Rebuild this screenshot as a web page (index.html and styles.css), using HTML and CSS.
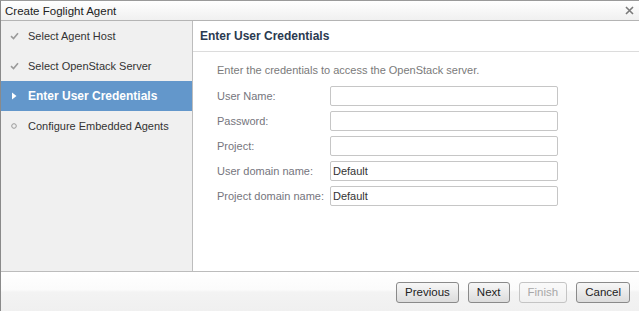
FILE: index.html
```html
<!DOCTYPE html>
<html>
<head>
<meta charset="utf-8">
<link rel="stylesheet" href="styles.css">
</head>
<body>
<div class="dialog">
  <div class="titlebar">
    <span class="title">Create Foglight Agent</span>
    <svg class="close" width="9" height="9" viewBox="0 0 9 9"><path d="M1 1L8 8M8 1L1 8" stroke="#7a7a7a" stroke-width="1.6"/></svg>
  </div>
  <div class="main">
    <div class="sidebar">
      <div class="step done">
        <svg class="icon" width="9" height="8" viewBox="0 0 9 8"><path d="M1 4.2L3.5 6.5L8 1.2" fill="none" stroke="#9a9a9a" stroke-width="1.6"/></svg>
        <span>Select Agent Host</span>
      </div>
      <div class="step done">
        <svg class="icon" width="9" height="8" viewBox="0 0 9 8"><path d="M1 4.2L3.5 6.5L8 1.2" fill="none" stroke="#9a9a9a" stroke-width="1.6"/></svg>
        <span>Select OpenStack Server</span>
      </div>
      <div class="step active">
        <svg class="icon" width="9" height="8" viewBox="0 0 9 8"><path d="M2 0.5L6.5 4L2 7.5Z" fill="#ffffff"/></svg>
        <span>Enter User Credentials</span>
      </div>
      <div class="step">
        <svg class="icon" width="9" height="8" viewBox="0 0 9 8"><circle cx="4" cy="4" r="2.3" fill="none" stroke="#9a9a9a" stroke-width="1"/></svg>
        <span>Configure Embedded Agents</span>
      </div>
    </div>
    <div class="content">
      <div class="header">Enter User Credentials</div>
      <div class="body">
        <p class="desc">Enter the credentials to access the OpenStack server.</p>
        <div class="form">
          <label>User Name:</label><div class="input"></div>
          <label>Password:</label><div class="input"></div>
          <label>Project:</label><div class="input"></div>
          <label>User domain name:</label><div class="input">Default</div>
          <label>Project domain name:</label><div class="input">Default</div>
        </div>
      </div>
    </div>
  </div>
  <div class="footer">
    <button class="btn">Previous</button>
    <button class="btn">Next</button>
    <button class="btn disabled">Finish</button>
    <button class="btn">Cancel</button>
  </div>
</div>
</body>
</html>
```
FILE: styles.css
```css
html, body {
  margin: 0;
  padding: 0;
  background: #ffffff;
}
body {
  font-family: "Liberation Sans", Arial, sans-serif;
  font-size: 11px;
  color: #333;
}
.dialog {
  width: 639px;
  height: 311px;
  box-sizing: border-box;
  border-left: 1px solid #8a8a8a;
  border-top: 1px solid #9a9a9a;
  display: flex;
  flex-direction: column;
}
.titlebar {
  height: 19px;
  flex: none;
  display: flex;
  align-items: center;
  justify-content: space-between;
  padding: 0 5px 0 4px;
  background: linear-gradient(#ffffff, #f0f0f0);
  border-bottom: 1px solid #b4b4b4;
}
.title {
  color: #222;
  font-size: 11.5px;
}
.main {
  flex: 1;
  display: flex;
  min-height: 0;
}
.sidebar {
  width: 191px;
  flex: none;
  background: #f0f0f0;
  border-right: 1px solid #bdbdbd;
}
.step {
  height: 30px;
  display: flex;
  align-items: center;
  padding-left: 9px;
  color: #333;
}
.step .icon {
  width: 9px;
  margin-right: 9px;
  flex: none;
}
.step.active {
  background: #6397cb;
  color: #ffffff;
  font-weight: bold;
  font-size: 12px;
}
.content {
  flex: 1;
  display: flex;
  flex-direction: column;
}
.header {
  height: 30px;
  flex: none;
  display: flex;
  align-items: center;
  padding-left: 7px;
  font-weight: bold;
  font-size: 12px;
  color: #2a3a50;
  border-bottom: 1px solid #dcdcdc;
}
.body {
  padding: 11px 0 0 24px;
}
.desc {
  margin: 0 0 9px 0;
  color: #7a7a7a;
  line-height: 14px;
}
.form {
  display: grid;
  grid-template-columns: 113px 228px;
  row-gap: 5px;
  align-items: center;
}
.form label {
  color: #75757d;
  white-space: nowrap;
}
.input {
  height: 18px;
  border: 1px solid #c6c6c6;
  border-radius: 2px;
  background: #fff;
  padding-left: 2px;
  line-height: 18px;
  color: #333;
}
.footer {
  height: 39px;
  flex: none;
  border-top: 1px solid #bcbcbc;
  background: linear-gradient(#ffffff 0%, #fbfbfb 45%, #f3f3f3 52%, #f0f0f0 100%);
  display: flex;
  align-items: center;
  justify-content: flex-end;
  gap: 9px;
  padding-right: 9px;
}
.btn {
  font-family: "Liberation Sans", Arial, sans-serif;
  font-size: 11.5px;
  height: 21px;
  padding: 0 8px;
  border: 1px solid #8a8a8a;
  border-radius: 3px;
  background: linear-gradient(#f7f7f7, #dcdcdc);
  color: #222;
  margin-top: 1px;
}
.btn.disabled {
  color: #a8a8a8;
  border-color: #c4c4c4;
  background: linear-gradient(#fafafa, #f0f0f0);
}
```
